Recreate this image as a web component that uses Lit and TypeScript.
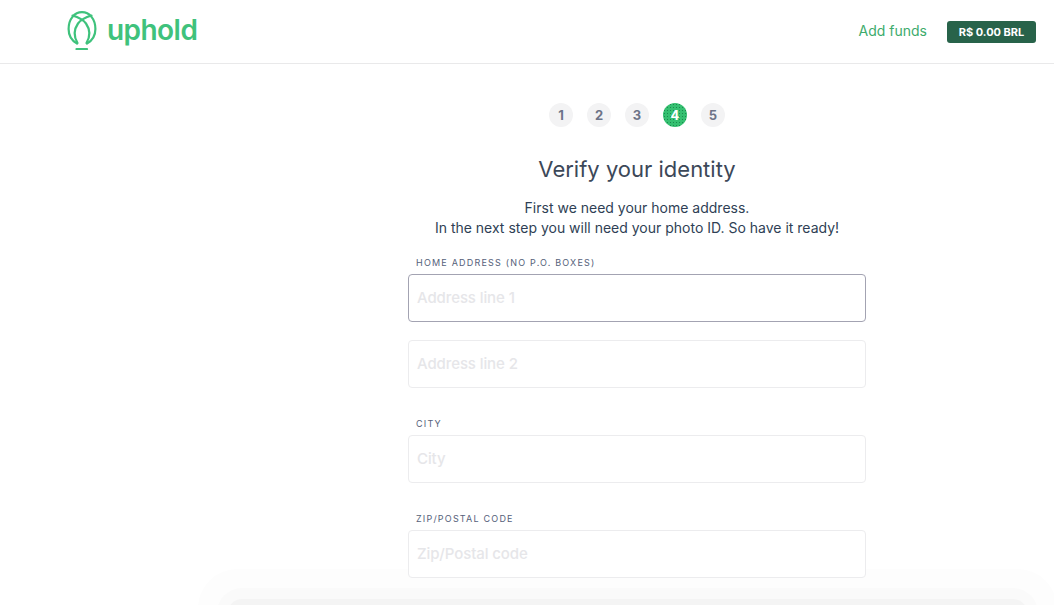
import { LitElement, html, css } from "lit";
import { customElement } from "lit/decorators.js";

@customElement("app-root")
export class AppRoot extends LitElement {
  static styles = css`
    :host { display: block; position: relative; height: 605px; overflow: hidden; background: #fff;
      font-family: "Inter", "Liberation Sans", sans-serif; color: #3c4a5c; }
    header { height: 63px; border-bottom: 1px solid #e9e9ea; display: flex; align-items: center;
      justify-content: space-between; padding: 0 18px 0 67px; }
    .brand { display: flex; align-items: center; gap: 9px; color: #3fc27c; margin-top: -3px; }
    .brand svg { display: block; }
    .word { font-family: "Inter", sans-serif; font-size: 28px; font-weight: 600; line-height: 36px; letter-spacing: -0.55px; margin-top: -1px; }
    .right { display: flex; align-items: center; gap: 20px; margin-top: -1px; }
    .add { color: #3dab6c; font-size: 14px; margin-top: -1px; }
    .bal { background: #28634a; color: #fff; font-size: 11px; font-weight: 700; height: 22px; width: 89px; margin-top: 1px;
      border-radius: 3px; display: flex; align-items: center; justify-content: center; }
    main { display: flex; flex-direction: column; align-items: center; padding-left: 220px; }
    .steps { display: flex; gap: 14px; margin-top: 39px; }
    .step { width: 24px; height: 24px; border-radius: 50%; background: #f3f3f4; color: #6d7488; font-size: 13px; font-weight: 700;
      display: flex; align-items: center; justify-content: center; }
    .step.on { color: #fff; background-color: #35c071;
      background-image: radial-gradient(#1b8a4e 0.7px, transparent 0.8px); background-size: 3px 3px; }
    h1 { margin: 27px 0 0; font-size: 22px; font-weight: 400; line-height: 30px; color: #3c4858; }
    p { margin: 14px 0 0; text-align: center; font-size: 14px; line-height: 20px; color: #2f3f55; }
    form { width: 458px; display: flex; flex-direction: column; margin-top: 19px; }
    label { display: block; font-size: 9px; letter-spacing: 1.2px; line-height: 12px; color: #55617a; padding-left: 8px; margin-bottom: 5px; text-transform: uppercase; }
    .group { display: flex; flex-direction: column; gap: 18px; }
    .group + .group { margin-top: 30px; }
    .input { box-sizing: border-box; height: 48px; border: 1px solid #ececee; border-radius: 4px; padding: 0 8px 2px;
      display: flex; align-items: center; font-size: 15px; font-weight: 500; letter-spacing: -0.1px; color: #e6e6e9; background: #fff; position: relative; z-index: 2; }
    .input.focus { border-color: #a3a3b2; }
    .sheet { position: absolute; left: 228px; right: 27px; top: 599px; height: 60px; background: #f4f4f4;
      border-radius: 14px; box-shadow: 0 0 0 11px #fafafa, 0 0 0 30px #fdfdfd; }
  `;

  render() {
    return html`
      <header>
        <div class="brand">
          <svg width="31" height="40" viewBox="0 0 31 40" fill="none" stroke="currentColor" stroke-width="2.2" stroke-linecap="round">
            <path d="M10 33.5C4.5 30.5 1.6 25 1.6 19C1.6 9 7.5 2.2 15 2.2C22.5 2.2 28.4 9 28.4 19C28.4 25 25.5 30.5 20 33.5" />
            <path d="M5.5 5.5C11 7 16 9.5 19 13.5C23.5 20 23 27 19.5 33" />
            <path d="M24.5 5.5C19 7 14 9.5 11 13.5C6.5 20 7 27 10.5 33" />
            <path d="M9.5 39H20" />
          </svg>
          <span class="word">uphold</span>
        </div>
        <div class="right">
          <span class="add">Add funds</span>
          <span class="bal">R$ 0.00 BRL</span>
        </div>
      </header>
      <main>
        <div class="steps">
          ${[1, 2, 3, 4, 5].map((n) => html`<div class="step ${n === 4 ? "on" : ""}">${n}</div>`)}
        </div>
        <h1>Verify your identity</h1>
        <p>First we need your home address.<br />In the next step you will need your photo ID. So have it ready!</p>
        <form>
          <div class="group">
            <div>
              <label>Home address (no P.O. boxes)</label>
              <div class="input focus">Address line 1</div>
            </div>
            <div class="input">Address line 2</div>
          </div>
          <div class="group">
            <div><label>City</label><div class="input">City</div></div>
          </div>
          <div class="group">
            <div><label>Zip/Postal code</label><div class="input">Zip/Postal code</div></div>
          </div>
        </form>
      </main>
      <div class="sheet"></div>
    `;
  }
}
